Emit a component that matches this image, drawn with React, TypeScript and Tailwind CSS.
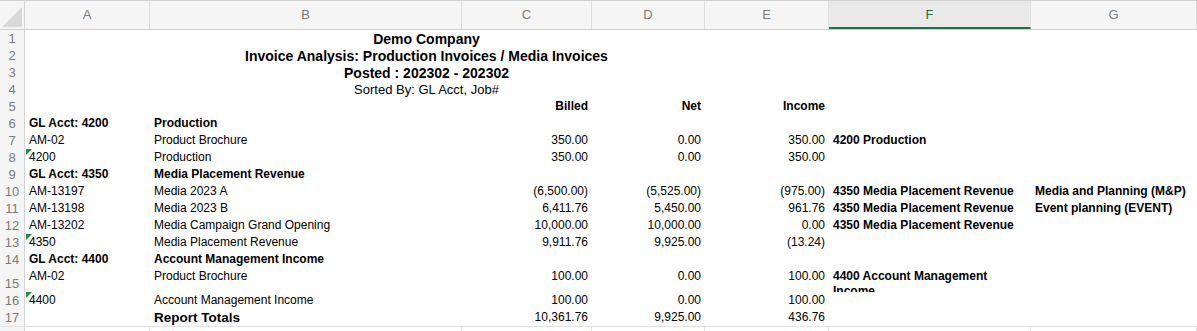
type Cell = {
  text?: string;
  bold?: boolean;
  right?: boolean;
  flag?: boolean;
};

const cols = [
  { key: "A", w: "w-[125px]" },
  { key: "B", w: "w-[312px]" },
  { key: "C", w: "w-[130px]" },
  { key: "D", w: "w-[113px]" },
  { key: "E", w: "w-[124px]" },
  { key: "F", w: "w-[202px]" },
  { key: "G", w: "flex-1" },
];

type RowDef = {
  n: number;
  cells?: Cell[];
  title?: { text: string; cls: string };
  tall?: boolean;
  big?: boolean;
};

const rows: RowDef[] = [
  { n: 1, title: { text: "Demo Company", cls: "font-bold text-[14px]" } },
  { n: 2, title: { text: "Invoice Analysis: Production Invoices / Media Invoices", cls: "font-bold text-[14px]" } },
  { n: 3, title: { text: "Posted : 202302 - 202302", cls: "font-bold text-[14px]" } },
  { n: 4, title: { text: "Sorted By: GL Acct, Job#", cls: "text-[13px]" } },
  {
    n: 5,
    cells: [{}, {}, { text: "Billed", bold: true, right: true }, { text: "Net", bold: true, right: true }, { text: "Income", bold: true, right: true }, {}, {}],
  },
  { n: 6, cells: [{ text: "GL Acct: 4200", bold: true }, { text: "Production", bold: true }, {}, {}, {}, {}, {}] },
  {
    n: 7,
    cells: [{ text: "AM-02" }, { text: "Product Brochure" }, { text: "350.00", right: true }, { text: "0.00", right: true }, { text: "350.00", right: true }, { text: "4200 Production", bold: true }, {}],
  },
  {
    n: 8,
    cells: [{ text: "4200", flag: true }, { text: "Production" }, { text: "350.00", right: true }, { text: "0.00", right: true }, { text: "350.00", right: true }, {}, {}],
  },
  { n: 9, cells: [{ text: "GL Acct: 4350", bold: true }, { text: "Media Placement Revenue", bold: true }, {}, {}, {}, {}, {}] },
  {
    n: 10,
    cells: [
      { text: "AM-13197" },
      { text: "Media 2023 A" },
      { text: "(6,500.00)", right: true },
      { text: "(5,525.00)", right: true },
      { text: "(975.00)", right: true },
      { text: "4350 Media Placement Revenue", bold: true },
      { text: "Media and Planning (M&P)", bold: true },
    ],
  },
  {
    n: 11,
    cells: [
      { text: "AM-13198" },
      { text: "Media 2023 B" },
      { text: "6,411.76", right: true },
      { text: "5,450.00", right: true },
      { text: "961.76", right: true },
      { text: "4350 Media Placement Revenue", bold: true },
      { text: "Event planning (EVENT)", bold: true },
    ],
  },
  {
    n: 12,
    cells: [
      { text: "AM-13202" },
      { text: "Media Campaign Grand Opening" },
      { text: "10,000.00", right: true },
      { text: "10,000.00", right: true },
      { text: "0.00", right: true },
      { text: "4350 Media Placement Revenue", bold: true },
      {},
    ],
  },
  {
    n: 13,
    cells: [
      { text: "4350", flag: true },
      { text: "Media Placement Revenue" },
      { text: "9,911.76", right: true },
      { text: "9,925.00", right: true },
      { text: "(13.24)", right: true },
      {},
      {},
    ],
  },
  { n: 14, cells: [{ text: "GL Acct: 4400", bold: true }, { text: "Account Management Income", bold: true }, {}, {}, {}, {}, {}] },
  {
    n: 15,
    tall: true,
    cells: [
      { text: "AM-02" },
      { text: "Product Brochure" },
      { text: "100.00", right: true },
      { text: "0.00", right: true },
      { text: "100.00", right: true },
      { text: "4400 Account Management Income", bold: true },
      {},
    ],
  },
  {
    n: 16,
    cells: [
      { text: "4400", flag: true },
      { text: "Account Management Income" },
      { text: "100.00", right: true },
      { text: "0.00", right: true },
      { text: "100.00", right: true },
      {},
      {},
    ],
  },
  {
    n: 17,
    big: true,
    cells: [{}, { text: "Report Totals", bold: true }, { text: "10,361.76", right: true }, { text: "9,925.00", right: true }, { text: "436.76", right: true }, {}, {}],
  },
];

function GridRow({ row }: { row: RowDef }) {
  const h = row.tall ? "h-[24px]" : "h-[17px]";
  return (
    <div className={`flex ${h}`}>
      <div
        className={`w-[25px] shrink-0 flex justify-center text-[13px] text-[#7b7b7b] bg-[#f5f5f5] border-r border-[#d4d4d4] leading-[17px] ${
          row.tall ? "items-end" : "items-center"
        }`}
      >
        {row.n}
      </div>
      {row.title ? (
        <div className={`w-[803px] shrink-0 flex items-center justify-center leading-none ${row.title.cls}`}>{row.title.text}</div>
      ) : (
        cols.map((c, i) => {
          const cell = row.cells?.[i] ?? {};
          const isBig = row.big && i === 1;
          return (
            <div
              key={c.key}
              className={`${c.w} shrink-0 relative flex px-[4px] overflow-hidden whitespace-nowrap ${
                row.tall ? "items-start pt-[1px]" : "items-center"
              } ${cell.right ? "justify-end" : "justify-start"} ${cell.bold ? "font-bold" : ""} ${
                isBig ? "text-[13.5px]" : "text-[12px]"
              } leading-[15px]`}
            >
              {cell.flag && (
                <span className="absolute left-[1px] top-0 w-0 h-0 border-t-[6px] border-r-[6px] border-t-[#1d8a3c] border-r-transparent" />
              )}
              {row.tall && i === 5 ? (
                <span className="whitespace-normal leading-[15px] w-[170px]">{cell.text}</span>
              ) : (
                cell.text
              )}
            </div>
          );
        })
      )}
    </div>
  );
}

export default function App() {
  return (
    <div className="w-[1197px] h-[331px] overflow-hidden bg-white text-black font-['Liberation_Sans',Arial,sans-serif]">
      {/* column headers */}
      <div className="flex h-[30px] border-t border-b border-[#d0d0d0] bg-[#f5f5f5]">
        <div className="w-[25px] shrink-0 relative border-r border-[#d4d4d4]">
          <span className="absolute right-[2px] bottom-[2px] w-0 h-0 border-b-[20px] border-l-[20px] border-b-[#d9d9d9] border-l-transparent" />
        </div>
        {cols.map((c) => (
          <div
            key={c.key}
            className={`${c.w} shrink-0 flex items-center justify-center text-[13px] border-r border-[#dedede] ${
              c.key === "F" ? "bg-[#e9e9e9] text-[#1e7145] border-b-2 border-b-[#1e7145] pt-[2px]" : "text-[#7b7b7b]"
            }`}
          >
            {c.key}
          </div>
        ))}
      </div>
      {rows.map((r) => (
        <GridRow key={r.n} row={r} />
      ))}
      {/* partial row 18 */}
      <div className="flex h-[20px] border-t border-[#e2e2e2]">
        <div className="w-[25px] shrink-0 bg-[#f5f5f5] border-r border-[#d4d4d4]" />
        {cols.map((c) => (
          <div key={c.key} className={`${c.w} shrink-0 border-r border-[#e2e2e2]`} />
        ))}
      </div>
    </div>
  );
}
